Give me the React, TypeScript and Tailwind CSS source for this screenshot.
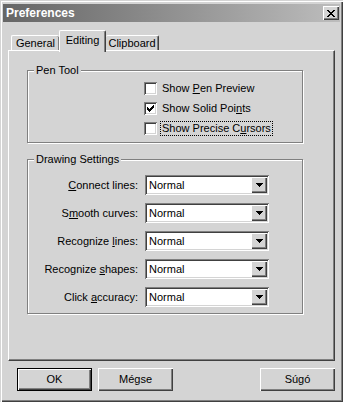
import type { ReactNode } from 'react'

const raised =
  'shadow-[inset_1px_1px_0_#ffffff,inset_-1px_-1px_0_#404040,inset_-2px_-2px_0_#808080]'
const sunken =
  'shadow-[inset_1px_1px_0_#808080,inset_-1px_-1px_0_#ffffff,inset_2px_2px_0_#404040,inset_-2px_-2px_0_#d4d4d4]'
const etched = 'border border-[#808080] shadow-[inset_1px_1px_0_#ffffff,1px_1px_0_#ffffff]'

function CloseGlyph() {
  return (
    <svg width="8" height="7" viewBox="0 0 8 7" shapeRendering="crispEdges">
      <path
        fill="#000"
        d="M0 0h2v1H0z M6 0h2v1H6z M1 1h2v1H1z M5 1h2v1H5z M2 2h4v1H2z M3 3h2v1H3z M2 4h4v1H2z M1 5h2v1H1z M5 5h2v1H5z M0 6h2v1H0z M6 6h2v1H6z"
      />
    </svg>
  )
}

function CheckGlyph() {
  return (
    <svg width="7" height="7" viewBox="0 0 7 7" shapeRendering="crispEdges">
      <path
        fill="#000"
        d="M6 0h1v1H6z M5 1h2v1H5z M0 2h1v1H0z M4 2h3v1H4z M0 3h2v1H0z M3 3h3v1H3z M0 4h5v1H0z M1 5h3v1H1z M2 6h1v1H2z"
      />
    </svg>
  )
}

function ArrowGlyph() {
  return (
    <svg width="7" height="4" viewBox="0 0 7 4" shapeRendering="crispEdges">
      <path fill="#000" d="M0 0h7v1H0z M1 1h5v1H1z M2 2h3v1H2z M3 3h1v1H3z" />
    </svg>
  )
}

function Check({ label, checked, focused }: { label: ReactNode; checked?: boolean; focused?: boolean }) {
  return (
    <div className="flex h-[20px] items-center">
      <div className={`flex h-[13px] w-[13px] items-center justify-center bg-white ${sunken}`}>
        {checked && <CheckGlyph />}
      </div>
      <span
        className={`ml-[3px] border px-[1px] leading-[13px] ${
          focused ? 'border-dotted border-black' : 'border-transparent'
        }`}
      >
        {label}
      </span>
    </div>
  )
}

function Combo({ label }: { label: ReactNode }) {
  return (
    <div className="flex h-[20px] items-center">
      <span className="w-[110px] text-right leading-[13px]">{label}</span>
      <div className={`ml-[7px] flex h-[20px] w-[124px] items-center bg-white p-[2px] ${sunken}`}>
        <span className="flex-1 pl-[2px] leading-[13px]">Normal</span>
        <div className={`flex h-[16px] w-[16px] items-center justify-center bg-[#d4d4d4] ${raised}`}>
          <ArrowGlyph />
        </div>
      </div>
    </div>
  )
}

function Button({ children, primary, className = '' }: { children: ReactNode; primary?: boolean; className?: string }) {
  return (
    <div
      className={`h-[23px] w-[75px] ${primary ? 'border border-black' : ''} ${className}`}
    >
      <div className={`flex h-full w-full items-center justify-center bg-[#d4d4d4] ${raised}`}>
        {children}
      </div>
    </div>
  )
}

export default function App() {
  return (
    <div className="flex h-[402px] w-[343px] flex-col bg-[#d4d4d4] px-[3px] pt-[4px] font-['Liberation_Sans',Arial,sans-serif] text-[11px] text-black shadow-[inset_1px_1px_0_#d4d4d4,inset_2px_2px_0_#ffffff,inset_-1px_-1px_0_#404040,inset_-2px_-2px_0_#808080]">
      {/* title bar */}
      <div className="flex h-[18px] items-center justify-between bg-gradient-to-r from-[#666666] to-[#bdbdbd] pl-[3px] pr-[1px]">
        <span className="text-[12px] font-bold leading-none text-white">Preferences</span>
        <div className={`flex h-[14px] w-[16px] items-center justify-center bg-[#d4d4d4] ${raised}`}>
          <CloseGlyph />
        </div>
      </div>

      <div className="mx-[5px] mt-[8px] flex flex-col">
        {/* tabs */}
        <div className="flex h-[20px] items-end pl-[3px]">
          <div className="flex h-[15px] w-[48px] justify-center rounded-t-[2px] border-l border-t border-white pt-[1px] leading-[13px] shadow-[inset_-1px_0_0_#808080]">
            General
          </div>
          <div className="relative z-10 -mb-[2px] flex h-[22px] w-[47px] justify-center rounded-t-[2px] border-l border-r border-t border-l-white border-r-[#404040] border-t-white bg-[#d4d4d4] pt-[3px] leading-[13px] shadow-[inset_-1px_0_0_#808080]">
            Editing
          </div>
          <div className="flex h-[15px] w-[53px] justify-center rounded-t-[2px] border-r border-t border-r-[#404040] border-t-white pt-[1px] leading-[13px] shadow-[inset_-1px_0_0_#808080]">
            Clipboard
          </div>
        </div>

        {/* panel */}
        <div className="h-[311px] border-b border-l border-r border-t border-b-[#404040] border-l-white border-r-[#404040] border-t-white shadow-[inset_-1px_-1px_0_#808080]">
          <fieldset className={`ml-[18px] mt-[13px] w-[276px] ${etched}`}>
            <legend className="ml-[6px] bg-[#d4d4d4] px-[2px] leading-[13px]">Pen Tool</legend>
            <div className="flex flex-col pb-[4px] pl-[116px] pt-[1px]">
              <Check
                label={
                  <>
                    Show <u>P</u>en Preview
                  </>
                }
              />
              <Check
                checked
                label={
                  <>
                    Show Solid Poi<u>n</u>ts
                  </>
                }
              />
              <Check
                focused
                label={
                  <>
                    Show Precise C<u>u</u>rsors
                  </>
                }
              />
            </div>
          </fieldset>

          <fieldset className={`ml-[18px] mt-[10px] w-[276px] ${etched}`}>
            <legend className="ml-[6px] bg-[#d4d4d4] px-[2px] leading-[13px]">Drawing Settings</legend>
            <div className="flex flex-col gap-[8px] pb-[6px] pt-[9px]">
              <Combo
                label={
                  <>
                    <u>C</u>onnect lines:
                  </>
                }
              />
              <Combo
                label={
                  <>
                    S<u>m</u>ooth curves:
                  </>
                }
              />
              <Combo
                label={
                  <>
                    Recognize <u>l</u>ines:
                  </>
                }
              />
              <Combo
                label={
                  <>
                    Recognize <u>s</u>hapes:
                  </>
                }
              />
              <Combo
                label={
                  <>
                    Click <u>a</u>ccuracy:
                  </>
                }
              />
            </div>
          </fieldset>
        </div>
      </div>

      {/* buttons */}
      <div className="ml-[14px] mr-[5px] mt-[7px] flex">
        <Button primary>OK</Button>
        <Button className="ml-[6px]">Mégse</Button>
        <Button className="ml-auto">Súgó</Button>
      </div>
    </div>
  )
}
